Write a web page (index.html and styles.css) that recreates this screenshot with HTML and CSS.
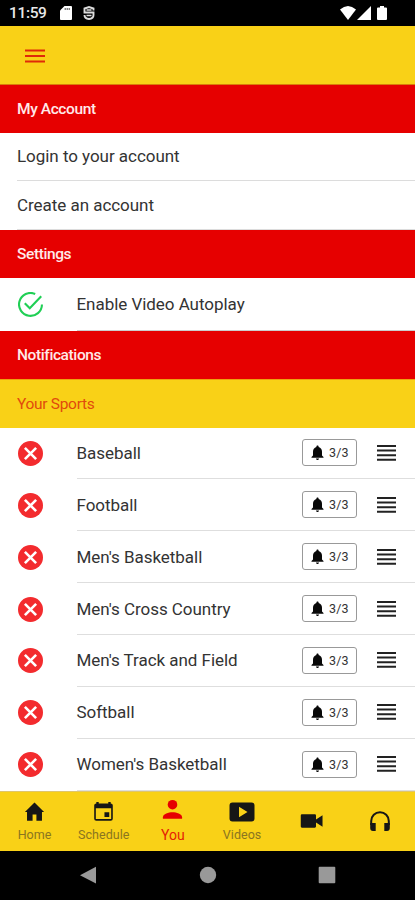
FILE: index.html
```html
<!DOCTYPE html>
<html lang="en">
<head>
<meta charset="utf-8">
<meta name="viewport" content="width=device-width, initial-scale=1">
<title>My Account</title>
<link rel="stylesheet" href="styles.css">
</head>
<body>
<svg class="sprite" aria-hidden="true">
  <symbol id="remove" viewBox="0 0 24 24"><circle cx="12" cy="12" r="12" fill="#f32b2e"/><path d="M6.600 6.600l10.800 10.800M17.400 6.600L6.600 17.400" stroke="#fff" stroke-width="2.500"/></symbol>
  <symbol id="bell" viewBox="4 2 16 20"><path d="M12 22c1.100 0 2-.9 2-2h-4c0 1.100.9 2 2 2zm6-6v-5c0-3.070-1.640-5.640-4.500-6.320V4c0-.83-.67-1.500-1.500-1.500s-1.500.67-1.500 1.500v.68C7.630 5.360 6 7.920 6 11v5l-2 2v1h16v-1l-2-2z"/></symbol>
  <symbol id="grip" viewBox="0 0 19 16"><path d="M0 1h19M0 5.600h19M0 10.200h19M0 14.800h19" stroke="#222" stroke-width="2"/></symbol>
</svg>
<div class="status">
  <span class="time">11:59</span>
  <svg class="sd" viewBox="0 0 12 14"><path d="M4.500 0H11q1 0 1 1v12q0 1-1 1H1q-1 0-1-1V4.500z" fill="#fff"/><path d="M4.600 3h5.600" stroke="#777" stroke-width="1.800" stroke-dasharray="1.300 .7"/></svg>
  <svg class="shield" viewBox="0 0 12 14"><path d="M10.500 4.500V2.500L6 1 1.500 2.500V6.500H10.500V9Q10.500 12.500 6 13 1.500 12.500 1.500 9" fill="none" stroke="#ddd" stroke-width="1.900"/><path d="M3.500 4h5M3.500 9.500h5" stroke="#ddd" stroke-width="1.300"/></svg>
  <span class="grow"></span>
  <svg class="wifi" viewBox="0 0 16 14"><path d="M0 3.500Q8-3.500 16 3.500L8 14z" fill="#fff"/></svg>
  <svg class="signal" viewBox="0 0 14 14"><path d="M14 0v14H0z" fill="#fff"/></svg>
  <svg class="battery" viewBox="0 0 10 14"><path d="M3 0h4v1.500h2q1 0 1 1V13q0 1-1 1H1q-1 0-1-1V2.500q0-1 1-1h2z" fill="#fff"/></svg>
</div>
<header class="topbar"><svg class="menu" viewBox="0 0 20 14"><path d="M0 1.500h20M0 7h20M0 12.500h20" stroke="#e02a08" stroke-width="2.200"/></svg></header>
<main>
  <h2 class="section account">My Account</h2>
  <div class="link">Login to your account</div>
  <div class="link last">Create an account</div>
  <h2 class="section">Settings</h2>
  <div class="setting">
    <svg class="check" viewBox="0 0 24 24"><path d="M16.500 1.900A11 11 0 1 0 23 12" fill="none" stroke="#20cf55" stroke-width="2"/><path d="M6.500 10.800l4.800 4.800L22.300 4" fill="none" stroke="#20cf55" stroke-width="2"/></svg>
    <span class="label">Enable Video Autoplay</span>
  </div>
  <h2 class="section">Notifications</h2>
  <h3 class="sports-head">Your Sports</h3>
  <ul class="sports">
    <li><svg class="remove"><use href="#remove"/></svg><div class="row"><span class="label">Baseball</span><span class="count"><svg><use href="#bell"/></svg>3/3</span><svg class="grip"><use href="#grip"/></svg></div></li>
    <li><svg class="remove"><use href="#remove"/></svg><div class="row"><span class="label">Football</span><span class="count"><svg><use href="#bell"/></svg>3/3</span><svg class="grip"><use href="#grip"/></svg></div></li>
    <li><svg class="remove"><use href="#remove"/></svg><div class="row"><span class="label">Men's Basketball</span><span class="count"><svg><use href="#bell"/></svg>3/3</span><svg class="grip"><use href="#grip"/></svg></div></li>
    <li><svg class="remove"><use href="#remove"/></svg><div class="row"><span class="label">Men's Cross Country</span><span class="count"><svg><use href="#bell"/></svg>3/3</span><svg class="grip"><use href="#grip"/></svg></div></li>
    <li><svg class="remove"><use href="#remove"/></svg><div class="row"><span class="label">Men's Track and Field</span><span class="count"><svg><use href="#bell"/></svg>3/3</span><svg class="grip"><use href="#grip"/></svg></div></li>
    <li><svg class="remove"><use href="#remove"/></svg><div class="row"><span class="label">Softball</span><span class="count"><svg><use href="#bell"/></svg>3/3</span><svg class="grip"><use href="#grip"/></svg></div></li>
    <li><svg class="remove"><use href="#remove"/></svg><div class="row"><span class="label">Women's Basketball</span><span class="count"><svg><use href="#bell"/></svg>3/3</span><svg class="grip"><use href="#grip"/></svg></div></li>
  </ul>
</main>
<nav class="tabs">
  <a><svg viewBox="0 0 24 24"><path d="M10 21v-6.500h4V21h5.800v-9H22L12 2 2 12h2.200v9z"/></svg><span>Home</span></a>
  <a><svg viewBox="0 0 24 24"><path fill-rule="evenodd" d="M18 12.300h-5v5h5zM17 1.500v1.500H7V1.500H4.500V3Q2.300 3 2.300 5v14q0 2 2.200 2h15q2.200 0 2.200-2V5q0-2-2.200-2V1.500zM20 19.300H4V8h16z"/></svg><span>Schedule</span></a>
  <a class="active"><svg viewBox="0 0 24 24"><circle cx="12" cy="6.500" r="5"/><path d="M2 21v-1.500C2 16 8 14.300 12 14.300s10 1.700 10 5.200V21z"/></svg><span>You</span></a>
  <a><svg class="video" viewBox="0 0 26 24"><path fill-rule="evenodd" d="M3.500 2.500h19Q25.500 2.500 25.500 5.500v13q0 3-3 3h-19q-3 0-3-3v-13q0-3 3-3zM10 6.700v10.600l8.500-5.300z"/></svg><span>Videos</span></a>
  <a class="solo"><svg class="camera" viewBox="0 0 24 16"><path d="M2 1h13.500q1.200 0 1.200 1.200V6.500L23.500 2v12l-6.800-4.500v4.300Q16.700 15 15.500 15H2Q.8 15 .8 13.800V2.200Q.8 1 2 1z"/></svg></a>
  <a class="solo"><svg class="phones" viewBox="0 0 22 22"><path d="M2.200 15v-4a8.800 8.800 0 0 1 17.600 0v4" fill="none" stroke="#161616" stroke-width="2"/><path d="M1.200 13h5.500v8H4q-2.800 0-2.800-3zM20.800 13h-5.500v8H18q2.800 0 2.800-3z"/></svg></a>
</nav>
<footer class="system">
  <svg viewBox="0 0 18 18"><path d="M17 .8v16.800L1 9.200z"/></svg>
  <svg viewBox="0 0 18 18"><circle cx="9" cy="9" r="8.200"/></svg>
  <svg viewBox="0 0 18 18"><rect x=".7" y=".7" width="16.600" height="16.600" rx="1"/></svg>
</footer>
</body>
</html>
```
FILE: styles.css
```css
* { box-sizing: border-box; }
body { margin: 0; width: 415px; height: 900px; overflow: hidden; background: #fff; color: #333; font-family: Roboto, "Liberation Sans", sans-serif; font-size: 17px; letter-spacing: -.04px; display: flex; flex-direction: column; }
svg { display: block; flex: none; }
h2, h3, ul { margin: 0; padding: 0; }
.sprite { display: none; }
.status { height: 25.500px; background: #000; color: #e8e8e8; display: flex; align-items: center; padding: 1px 28px 0 9px; flex: none; }
.time { width: 51px; font-size: 15.500px; font-weight: 500; letter-spacing: -.35px; line-height: 20px; white-space: nowrap; }
.sd { width: 12px; height: 14px; }
.shield { width: 12px; height: 14px; margin-left: 11px; }
.grow { flex: 1; }
.wifi { width: 16px; height: 14px; }
.signal { width: 14px; height: 14px; margin-left: 1px; }
.battery { width: 10px; height: 14px; margin-left: 6px; }
.topbar { height: 59.500px; flex: none; background: #f9d117; padding: 23px 0 0 24.500px; border-bottom: 1px solid #d97d0b; }
.menu { width: 20px; height: 14px; }
main { flex: none; }
.section, .sports-head { display: flex; align-items: center; padding-left: 17px; font-size: 15.500px; }
.section { height: 48px; background: #e60000; color: #ffe9e9; font-weight: 500; letter-spacing: -.4px; }
.account { height: 47.500px; }
.link { height: 48.500px; margin-left: 17px; display: flex; align-items: center; border-bottom: 1.500px solid #dcdcdc; }
.link.last { height: 49px; }
.setting { height: 53px; padding-left: 17.500px; display: flex; align-items: center; }
.check { width: 25px; height: 25px; margin-right: 34px; }
.setting .label { align-self: stretch; flex: 1; display: flex; align-items: center; border-bottom: 1px solid #ccc; }
.sports-head { height: 48.500px; background: #f9d117; color: #e14a0c; font-weight: 400; letter-spacing: -.3px; border-top: 1px solid #efa20d; }
.sports { list-style: none; }
.sports li { height: 51.860px; display: flex; align-items: center; padding-left: 17.500px; }
.remove { width: 25px; height: 25px; margin-right: 34px; }
.row { flex: 1; height: 100%; display: flex; align-items: center; border-bottom: 1.500px solid #dedede; padding-right: 19px; }
.row .label { flex: 1; }
.count { width: 55px; height: 27px; border: 1px solid #999; border-radius: 3px; display: flex; align-items: center; padding-left: 8px; font-size: 12.500px; letter-spacing: .1px; }
.count svg { width: 13px; height: 15px; margin-right: 5px; fill: #080808; }
.grip { width: 19px; height: 16px; margin-left: 20px; }
.tabs { height: 60px; flex: none; background: #f9d117; display: grid; grid-template-columns: repeat(6, 1fr); border-top: 1px solid #dfc66b; letter-spacing: .05px; }
.tabs a { display: flex; flex-direction: column; align-items: center; padding-top: 8px; font-size: 12.500px; color: #8a7520; }
.tabs svg { width: 23px; height: 24px; fill: #161616; }
.tabs span { line-height: 16px; margin-top: 3.500px; }
.tabs .video { width: 26px; }
.tabs .active { color: #e52105; font-size: 14px; padding-top: 6px; }
.tabs .active svg { fill: #e60000; }
.tabs .active span { margin-top: 5px; }
.tabs .solo { justify-content: center; padding-top: 0; }
.tabs .camera { height: 16px; }
.tabs .phones { width: 22px; height: 22px; }
.system { flex: 1; background: #000; display: flex; justify-content: space-between; padding: 15.500px 79px 0; }
.system svg { width: 18px; height: 18px; fill: #999; }
```
